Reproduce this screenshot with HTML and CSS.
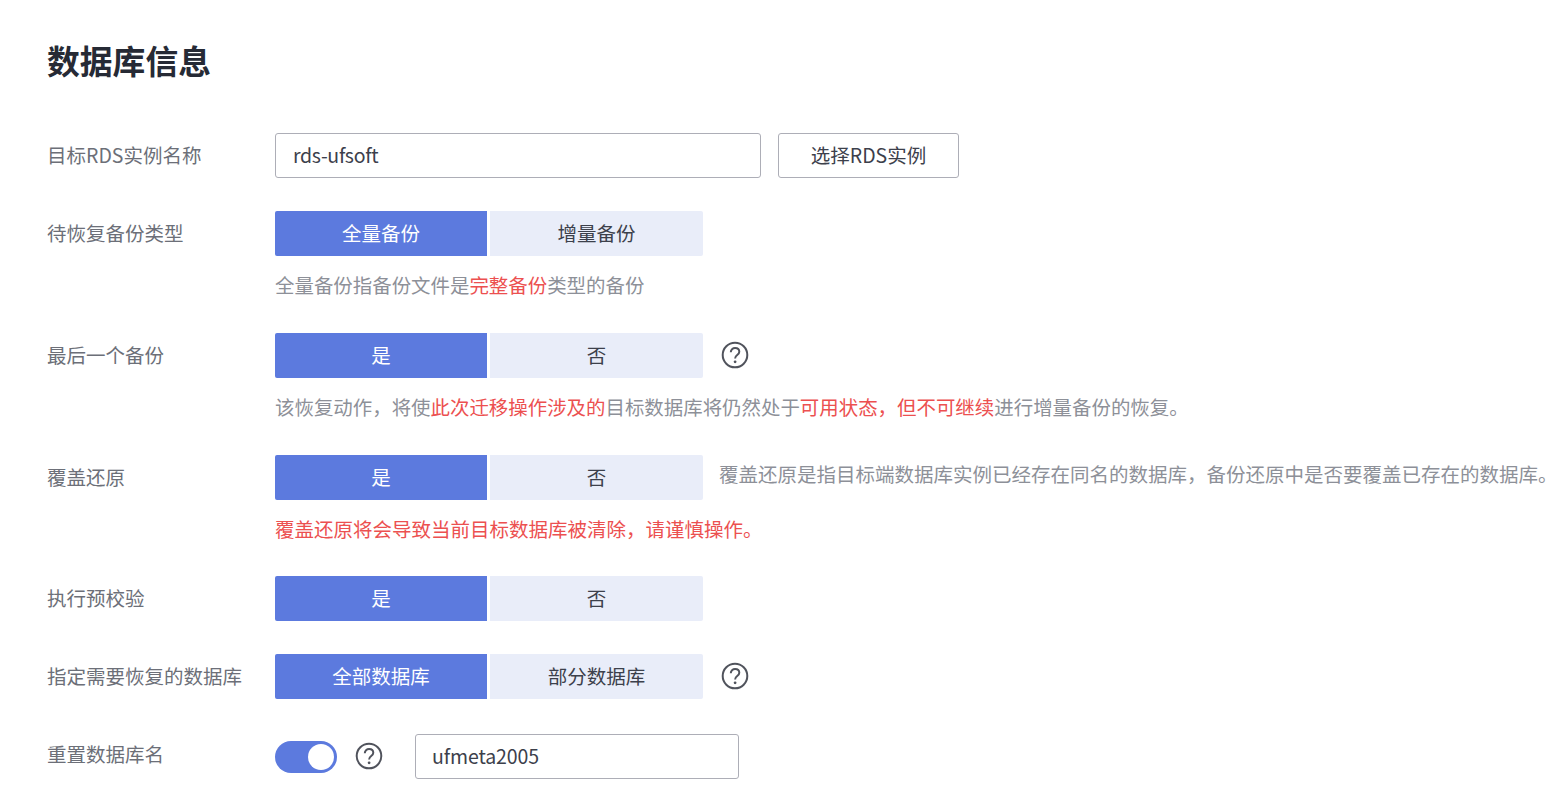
FILE: index.html
```html
<!DOCTYPE html>
<html lang="zh-CN">
<head>
<meta charset="utf-8">
<title>数据库信息</title>
<link rel="stylesheet" href="styles.css">
</head>
<body>
<main class="page">
  <h1 class="title">数据库信息</h1>
  <form class="form">
    <div class="row">
      <div class="label">目标RDS实例名称</div>
      <div class="field">
        <div class="line">
          <div class="input input-main">rds-ufsoft</div>
          <div class="btn">选择RDS实例</div>
        </div>
      </div>
    </div>
    <div class="row">
      <div class="label">待恢复备份类型</div>
      <div class="field">
        <div class="line">
          <div class="seg"><span class="opt on">全量备份</span><span class="opt">增量备份</span></div>
        </div>
        <p class="help">全量备份指备份文件是<em>完整备份</em>类型的备份</p>
      </div>
    </div>
    <div class="row">
      <div class="label">最后一个备份</div>
      <div class="field">
        <div class="line">
          <div class="seg"><span class="opt on">是</span><span class="opt">否</span></div>
          <svg class="q q-seg" viewBox="0 0 28 28"><circle cx="14" cy="14" r="12.3"/><path d="M9.8 11.2c0-2.500 1.900-4.100 4.300-4.100s4.200 1.500 4.200 3.700c0 3.300-4.200 3.200-4.200 6.600"/><circle class="dot" cx="14.100" cy="20.800" r="1.400"/></svg>
        </div>
        <p class="help">该恢复动作，将使<em>此次迁移操作涉及的</em>目标数据库将仍然处于<em>可用状态，但不可继续</em>进行增量备份的恢复。</p>
      </div>
    </div>
    <div class="row">
      <div class="label">覆盖还原</div>
      <div class="field">
        <div class="line">
          <div class="seg"><span class="opt on">是</span><span class="opt">否</span></div>
          <span class="note">覆盖还原是指目标端数据库实例已经存在同名的数据库，备份还原中是否要覆盖已存在的数据库。</span>
        </div>
        <p class="help help-short"><em>覆盖还原将会导致当前目标数据库被清除，请谨慎操作。</em></p>
      </div>
    </div>
    <div class="row">
      <div class="label">执行预校验</div>
      <div class="field">
        <div class="line">
          <div class="seg"><span class="opt on">是</span><span class="opt">否</span></div>
        </div>
      </div>
    </div>
    <div class="row">
      <div class="label">指定需要恢复的数据库</div>
      <div class="field">
        <div class="line">
          <div class="seg"><span class="opt on">全部数据库</span><span class="opt">部分数据库</span></div>
          <svg class="q q-seg" viewBox="0 0 28 28"><circle cx="14" cy="14" r="12.3"/><path d="M9.8 11.2c0-2.500 1.900-4.100 4.300-4.100s4.200 1.500 4.200 3.700c0 3.300-4.200 3.200-4.200 6.600"/><circle class="dot" cx="14.100" cy="20.800" r="1.400"/></svg>
        </div>
      </div>
    </div>
    <div class="row row-last">
      <div class="label label-high">重置数据库名</div>
      <div class="field">
        <div class="line">
          <span class="toggle"><span class="knob"></span></span>
          <svg class="q q-toggle" viewBox="0 0 28 28"><circle cx="14" cy="14" r="12.3"/><path d="M9.8 11.2c0-2.500 1.900-4.100 4.300-4.100s4.200 1.500 4.200 3.700c0 3.300-4.200 3.200-4.200 6.600"/><circle class="dot" cx="14.100" cy="20.800" r="1.400"/></svg>
          <div class="input input-name">ufmeta2005</div>
        </div>
      </div>
    </div>
  </form>
</main>
</body>
</html>
```

FILE: styles.css
```css
* { box-sizing: border-box; }
html, body { margin: 0; padding: 0; background: #fff; }
body {
  width: 1561px;
  height: 797px;
  overflow: hidden;
  font-family: "Noto Sans CJK SC", "Open Sans", sans-serif;
  font-size: 19.5px;
  color: #3c404b;
}
.page { padding: 38px 0 0 47px; }
.title {
  margin: 0;
  height: 44px;
  font-size: 32.8px;
  line-height: 44px;
  font-weight: 700;
  color: #262a35;
}
.form { display: flex; flex-direction: column; gap: 33px; margin-top: 51px; }
.row { display: flex; align-items: flex-start; }
.row-last { margin-top: 2px; }
.label {
  flex: 0 0 228px;
  height: 45px;
  line-height: 44px;
  color: #6c6f78;
  white-space: nowrap;
}
.label-high { line-height: 40px; }
.field { min-width: 0; }
.line { display: flex; align-items: center; height: 45px; }
.input {
  height: 45px;
  background: #fff;
  border: 1.5px solid #adaeb7;
  border-radius: 3px;
  line-height: 42px;
  white-space: nowrap;
}
.input-main { width: 486px; padding-left: 17px; letter-spacing: -0.3px; }
.input-name { width: 324px; padding-left: 16px; margin-left: 32px; letter-spacing: -0.1px; }
.btn {
  width: 181px;
  height: 45px;
  margin-left: 17px;
  border: 1.5px solid #adaeb7;
  border-radius: 3px;
  line-height: 42px;
  text-align: center;
  white-space: nowrap;
}
.seg { display: flex; gap: 3px; width: 428px; height: 45px; }
.opt {
  flex: 1 1 0;
  background: #e9edf9;
  line-height: 43px;
  text-align: center;
  border-radius: 0 2px 2px 0;
}
.opt.on { flex: 0 0 212px; background: #5c7ade; color: #fff; border-radius: 2px 0 0 2px; }
.help {
  margin: 0;
  height: 44px;
  padding-top: 14px;
  font-size: 19.45px;
  line-height: 29px;
  color: #8d9098;
  white-space: nowrap;
}
.help-short { height: 43px; font-size: 19.5px; }
.help em { font-style: normal; color: #ec5050; }
.note { margin-left: 16px; margin-top: -8px; color: #8d9098; white-space: nowrap; }
.q { display: block; width: 28px; height: 28px; margin-top: -1px; fill: none; stroke: #50535c; stroke-width: 2; }
.q .dot { fill: #50535c; stroke: none; }
.q-seg { margin-left: 18px; }
.q-toggle { margin-left: 18px; }
.toggle {
  display: flex;
  align-items: center;
  justify-content: flex-end;
  width: 62px;
  height: 32px;
  padding-right: 3px;
  background: #5c7ade;
  border-radius: 16px;
}
.knob { width: 26px; height: 26px; background: #fff; border-radius: 50%; }
```
